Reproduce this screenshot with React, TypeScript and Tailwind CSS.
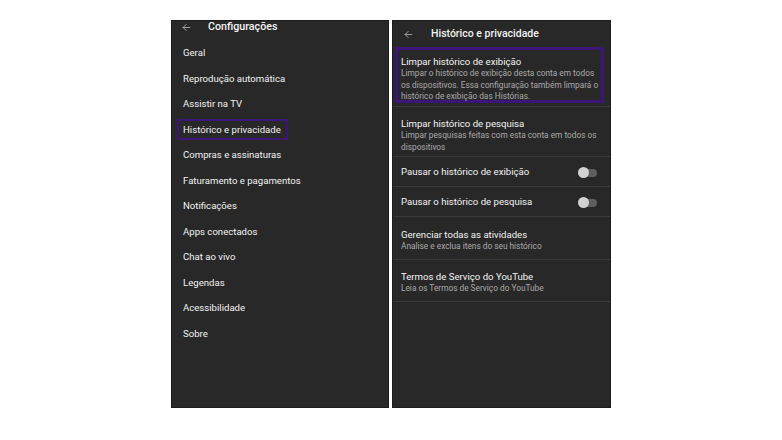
const leftItems = [
  "Geral",
  "Reprodução automática",
  "Assistir na TV",
  "Histórico e privacidade",
  "Compras e assinaturas",
  "Faturamento e pagamentos",
  "Notificações",
  "Apps conectados",
  "Chat ao vivo",
  "Legendas",
  "Acessibilidade",
  "Sobre",
];

function BackArrow() {
  return (
    <svg width="9" height="9" viewBox="0 0 16 16" fill="none" stroke="#bdbdbd" strokeWidth="1.4" strokeLinecap="round" strokeLinejoin="round">
      <path d="M14 8H2" />
      <path d="M7.5 2.5L2 8l5.5 5.5" />
    </svg>
  );
}

function Toggle() {
  return (
    <div className="relative w-[18px] h-[11px] flex items-center">
      <div className="w-[18px] h-[8px] rounded-full bg-[#5e5e5e]" />
      <div className="absolute left-[-1px] top-0 w-[11px] h-[11px] rounded-full bg-[#d2d2d2]" />
    </div>
  );
}

export default function App() {
  return (
    <div
      className="w-[782px] h-[440px] bg-white flex gap-[3px] pl-[171px] pt-[20px] text-[#f3f3f3]"
      style={{ fontFamily: "Roboto, 'Noto Sans', sans-serif" }}
    >
      {/* left screen */}
      <div className="w-[218px] h-[388px] bg-[#282828] border border-[#1c1c1c] flex flex-col">
        <div className="h-[13px] flex items-center pl-[10px]">
          <BackArrow />
          <span className="ml-[17px] text-[10.7px] font-medium leading-none">Configurações</span>
        </div>
        <div className="pt-[6.5px] flex flex-col">
          {leftItems.map((item) =>
            item === "Histórico e privacidade" ? (
              <div key={item} className="h-[25.5px] flex items-center pl-[5px]">
                <div className="h-[21px] w-[111px] border-2 border-[#3b1578] flex items-center pl-[4px] text-[9.6px]">
                  {item}
                </div>
              </div>
            ) : (
              <div key={item} className="h-[25.5px] flex items-center pl-[11px] text-[9.6px]">
                {item}
              </div>
            )
          )}
        </div>
      </div>

      {/* right screen */}
      <div className="w-[219px] h-[388px] bg-[#282828] border border-[#1c1c1c] flex flex-col">
        <div className="h-[26px] flex items-center pl-[11px]">
          <BackArrow />
          <span className="ml-[18px] text-[10.5px] font-medium leading-none">Histórico e privacidade</span>
        </div>

        <div className="h-[60px] border-b border-[#3a3a3a] pl-[2px] pr-[6px]">
          <div className="h-[56px] border-[3px] border-[#3b1578] pl-[3px] pr-[1px] pt-[5px]">
            <div className="text-[9.6px] leading-[13px]">Limpar histórico de exibição</div>
            <div className="text-[8.3px] leading-[11.5px] text-[#a9a9a9] whitespace-nowrap">
              Limpar o histórico de exibição desta conta em todos
              <br />
              os dispositivos. Essa configuração também limpará o
              <br />
              histórico de exibição das Histórias.
            </div>
          </div>
        </div>

        <div className="h-[50px] border-b border-[#3a3a3a] pl-[8px] pr-[8px] pt-[10px]">
          <div className="text-[9.6px] leading-[13px]">Limpar histórico de pesquisa</div>
          <div className="text-[8.3px] leading-[11.5px] text-[#a9a9a9] whitespace-nowrap">
            Limpar pesquisas feitas com esta conta em todos os
            <br />
            dispositivos
          </div>
        </div>

        <div className="h-[30px] border-b border-[#3a3a3a] pl-[8px] pr-[13px] pt-[2px] flex items-center justify-between">
          <span className="text-[9.6px]">Pausar o histórico de exibição</span>
          <Toggle />
        </div>

        <div className="h-[30px] border-b border-[#3a3a3a] pl-[8px] pr-[13px] pt-[2px] flex items-center justify-between">
          <span className="text-[9.6px]">Pausar o histórico de pesquisa</span>
          <Toggle />
        </div>

        <div className="h-[43px] border-b border-[#3a3a3a] pl-[8px] pt-[11px]">
          <div className="text-[9.6px] leading-[13px]">Gerenciar todas as atividades</div>
          <div className="text-[8.3px] leading-[11.5px] text-[#a9a9a9]">Analise e exclua itens do seu histórico</div>
        </div>

        <div className="h-[42px] border-b border-[#3a3a3a] pl-[8px] pt-[10px]">
          <div className="text-[9.6px] leading-[13px]">Termos de Serviço do YouTube</div>
          <div className="text-[8.3px] leading-[11.5px] text-[#a9a9a9]">Leia os Termos de Serviço do YouTube</div>
        </div>
      </div>
    </div>
  );
}
